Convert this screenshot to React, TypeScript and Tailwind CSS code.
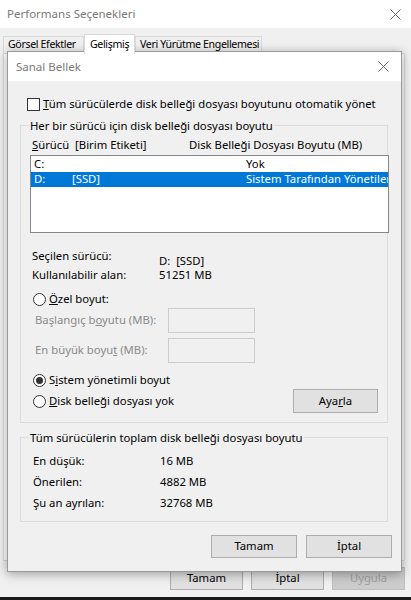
import React from 'react';

const font = { fontFamily: '"Noto Sans", "Open Sans", sans-serif' };

function CloseIcon() {
    return (
        <svg width="11" height="11" viewBox="0 0 11 11" className="shrink-0">
            <path d="M0.5 0.5 L10.5 10.5 M10.5 0.5 L0.5 10.5" stroke="#6b6b6b" strokeWidth="1" fill="none" />
        </svg>
    );
}

function Radio({ checked = false }: { checked?: boolean }) {
    return (
        <span className="w-[13px] h-[13px] rounded-full border border-[#333333] bg-white flex items-center justify-center shrink-0">
            {checked && <span className="w-[7px] h-[7px] rounded-full bg-[#333333]" />}
        </span>
    );
}

function WinButton({ children, className = '', disabled = false }: { children: React.ReactNode; className?: string; disabled?: boolean }) {
    return (
        <div
            className={
                'h-[23px] flex items-center justify-center border ' +
                (disabled ? 'bg-[#cccccc] border-[#bfbfbf] text-[#a0a0a0] ' : 'bg-[#e1e1e1] border-[#adadad] text-black ') +
                className
            }
        >
            {children}
        </div>
    );
}

function GroupBox({ title, className = '', children }: { title: string; className?: string; children: React.ReactNode }) {
    return (
        <div className={'relative border border-[#dcdcdc] ' + className}>
            {/* legend sits on the top border */}
            <span className="absolute -top-[8px] left-[8px] bg-[#f0f0f0] px-[1px] leading-[15px]">{title}</span>
            {children}
        </div>
    );
}

function SanalBellek() {
    return (
        <div className="absolute left-[7px] top-[51px] w-[395px] h-[521px] border border-[#9a9a9a] bg-[#f0f0f0] flex flex-col shadow-[0_2px_10px_rgba(0,0,0,0.35)]">
            <div className="h-[29px] bg-white flex items-center justify-between pl-[8px] pr-[12px]">
                <span className="text-[#7a7a7a] text-[11.5px]">Sanal Bellek</span>
                <CloseIcon />
            </div>

            <div className="flex flex-col pl-[12px]">
                {/* auto manage checkbox */}
                <div className="mt-[16px] h-[14px] flex items-center ml-[7px]">
                    <span className="w-[13px] h-[13px] border border-[#333333] bg-white shrink-0" />
                    <span className="ml-[3px]">
                        <u>T</u>üm sürücülerde disk belleği dosyası boyutunu otomatik yönet
                    </span>
                </div>

                <GroupBox title="Her bir sürücü için disk belleği dosyası boyutu" className="mt-[14px] w-[368px] h-[298px]">
                    <div className="flex flex-col">
                        <div className="mt-[12px] h-[15px] flex items-center ml-[11px]">
                            <span className="w-[157px]">
                                <u>S</u>ürücü&nbsp; [Birim Etiketi]
                            </span>
                            <span>Disk Belleği Dosyası Boyutu (MB)</span>
                        </div>

                        <div className="mt-[2px] ml-[9px] w-[359px] h-[78px] border border-[#828790] bg-white pt-[1px] overflow-hidden">
                            <div className="h-[15px] flex items-center pl-[3px] whitespace-nowrap">
                                <span className="w-[38px]">C:</span>
                                <span className="w-[174px]"></span>
                                <span>Yok</span>
                            </div>
                            <div className="h-[15px] flex items-center pl-[3px] bg-[#0078d7] text-white whitespace-nowrap">
                                <span className="w-[38px] shrink-0">D:</span>
                                <span className="w-[174px] shrink-0">[SSD]</span>
                                <span>Sistem Tarafından Yönetilen</span>
                            </div>
                        </div>

                        <div className="mt-[15px] flex items-start ml-[11px]">
                            <span className="w-[127px] leading-[15px]">Seçilen sürücü:</span>
                            <span className="pt-[5px] leading-[15px]">D:&nbsp; [SSD]</span>
                        </div>
                        <div className="h-[15px] flex items-center ml-[11px]">
                            <span className="w-[127px]">Kullanılabilir alan:</span>
                            <span>51251 MB</span>
                        </div>

                        <div className="mt-[9px] h-[15px] flex items-center ml-[12px]">
                            <Radio />
                            <span className="ml-[3px]">
                                <u>Ö</u>zel boyut:
                            </span>
                        </div>
                        <div className="mt-[1px] h-[25px] flex items-center ml-[14px]">
                            <span className="w-[133px] text-[#8a8a8a]">
                                Başlangıç b<u>o</u>yutu (MB):
                            </span>
                            <span className="w-[87px] h-[25px] border border-[#cccccc] bg-[#f0f0f0]" />
                        </div>
                        <div className="mt-[5px] h-[25px] flex items-center ml-[14px]">
                            <span className="w-[133px] text-[#8a8a8a]">
                                En büyük boyu<u>t</u> (MB):
                            </span>
                            <span className="w-[87px] h-[25px] border border-[#cccccc] bg-[#f0f0f0]" />
                        </div>

                        <div className="mt-[10px] h-[15px] flex items-center ml-[12px]">
                            <Radio checked />
                            <span className="ml-[3px]">
                                S<u>i</u>stem yönetimli boyut
                            </span>
                        </div>
                        <div className="mt-[1px] h-[24px] flex items-center justify-between ml-[12px] mr-[9px]">
                            <div className="flex items-center">
                                <Radio />
                                <span className="ml-[3px]">
                                    <u>D</u>isk belleği dosyası yok
                                </span>
                            </div>
                            <WinButton className="w-[85px] h-[24px]">
                                <span>
                                    Aya<u>r</u>la
                                </span>
                            </WinButton>
                        </div>
                    </div>
                </GroupBox>

                <GroupBox title="Tüm sürücülerin toplam disk belleği dosyası boyutu" className="mt-[14px] w-[368px] h-[85px]">
                    <div className="flex flex-col pt-[13px] ml-[12px]">
                        {[
                            ['En düşük:', '16 MB'],
                            ['Önerilen:', '4882 MB'],
                            ['Şu an ayrılan:', '32768 MB']
                        ].map(([label, value]) => (
                            <div key={label} className="h-[21px] flex items-center">
                                <span className="w-[127px]">{label}</span>
                                <span>{value}</span>
                            </div>
                        ))}
                    </div>
                </GroupBox>

                <div className="mt-[13px] flex justify-end gap-[9px] pr-[9px]">
                    <WinButton className="w-[86px]">Tamam</WinButton>
                    <WinButton className="w-[86px]">İptal</WinButton>
                </div>
            </div>
        </div>
    );
}

export default function App() {
    return (
        <div className="relative w-[411px] h-[600px] bg-[#f0f0f0] text-[11.3px] text-black flex flex-col overflow-hidden select-none" style={font}>
            {/* Outer window title */}
            <div className="h-[28px] bg-white flex items-center justify-between pl-[7px] pr-[10px] shrink-0">
                <span className="text-[#7a7a7a] text-[11.5px]">Performans Seçenekleri</span>
                <CloseIcon />
            </div>

            {/* Tabs */}
            <div className="mt-[5px] h-[20px] flex items-end pl-[3px] shrink-0 text-[10.6px] tracking-[-0.35px] whitespace-nowrap">
                <div className="w-[81px] h-[17px] pl-[4px] border border-[#d9d9d9] border-b-0 flex items-center bg-[#f0f0f0]">Görsel Efektler</div>
                <div className="relative z-10 w-[51px] h-[20px] pl-[5px] border border-[#d9d9d9] border-b-0 flex items-center bg-white -mb-px">Gelişmiş</div>
                <div className="w-[127px] h-[17px] pl-[4px] border border-[#d9d9d9] border-b-0 flex items-center bg-[#f0f0f0]">Veri Yürütme Engellemesi</div>
            </div>

            {/* Tab page */}
            <div className="ml-[3px] mr-[6px] h-[508px] border border-[#d9d9d9] bg-white shrink-0" />

            {/* Outer buttons */}
            <div className="mt-[6px] flex justify-end gap-[8px] pr-[6px] shrink-0">
                <WinButton className="w-[73px]">Tamam</WinButton>
                <WinButton className="w-[73px]">İptal</WinButton>
                <WinButton className="w-[73px]" disabled>
                    Uygula
                </WinButton>
            </div>

            <div className="flex-1" />
            <div className="h-[3px] bg-[#1a1a1a] shrink-0" />

            <SanalBellek />
        </div>
    );
}
